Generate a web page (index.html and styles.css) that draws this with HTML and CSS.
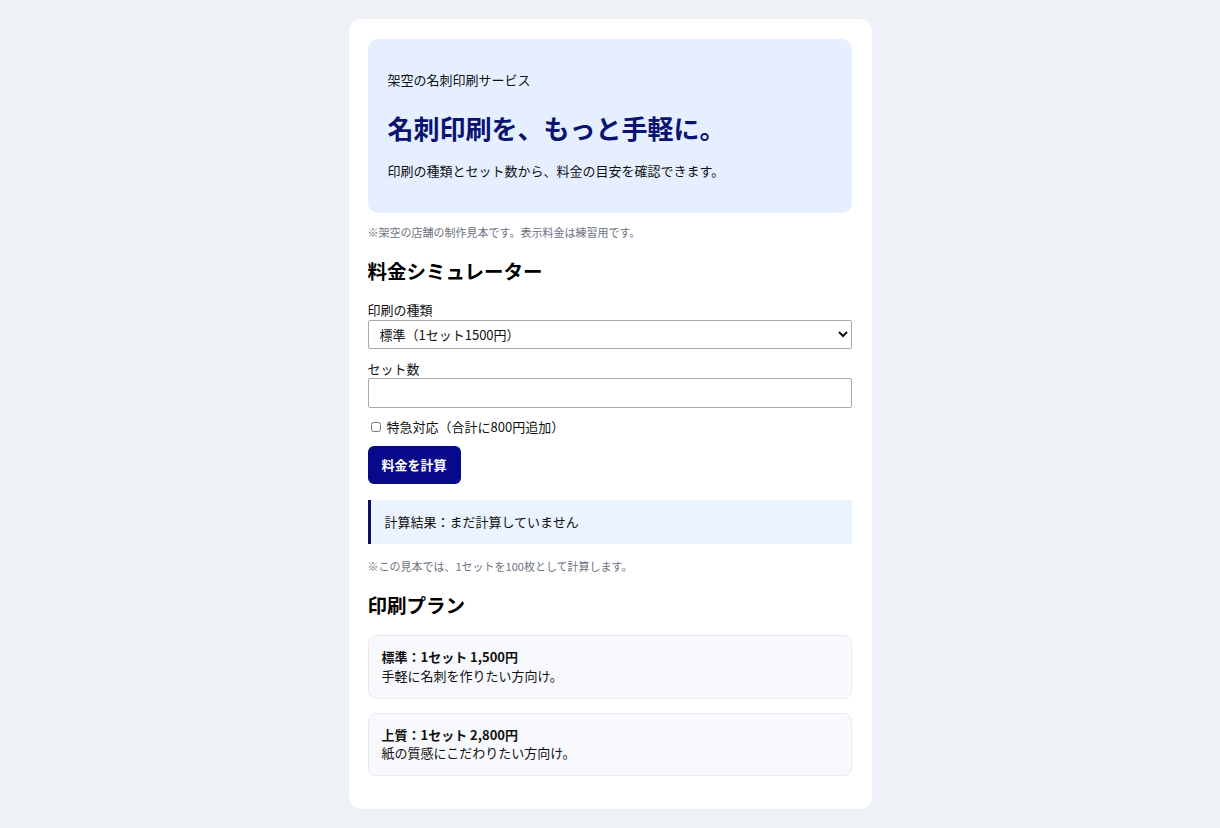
FILE: index.html
```html
<!DOCTYPE html>
<html lang="ja">
<head>
<meta charset="utf-8">
<title>名刺印刷</title>
<link rel="stylesheet" href="styles.css">
</head>
<body>
<main class="card">
  <section class="hero">
    <p class="eyebrow">架空の名刺印刷サービス</p>
    <h1 class="hero-title">名刺印刷を、もっと手軽に。</h1>
    <p class="hero-desc">印刷の種類とセット数から、料金の目安を確認できます。</p>
  </section>
  <p class="note note-top">※架空の店舗の制作見本です。表示料金は練習用です。</p>

  <h2 class="section-title">料金シミュレーター</h2>
  <form class="sim">
    <label class="field-label" for="type">印刷の種類</label>
    <select id="type" class="select">
      <option>標準（1セット1500円）</option>
      <option>上質（1セット2800円）</option>
    </select>
    <label class="field-label field-label-2" for="count">セット数</label>
    <input id="count" class="text-input" type="number">
    <label class="check-row"><input type="checkbox" class="check"> 特急対応（合計に800円追加）</label>
    <button type="button" class="btn">料金を計算</button>
  </form>
  <div class="result">計算結果：まだ計算していません</div>
  <p class="note note-mid">※この見本では、1セットを100枚として計算します。</p>

  <h2 class="section-title section-title-2">印刷プラン</h2>
  <div class="plans">
    <div class="plan">
      <strong class="plan-name">標準：1セット 1,500円</strong>
      <p class="plan-desc">手軽に名刺を作りたい方向け。</p>
    </div>
    <div class="plan">
      <strong class="plan-name">上質：1セット 2,800円</strong>
      <p class="plan-desc">紙の質感にこだわりたい方向け。</p>
    </div>
  </div>
</main>
</body>
</html>
```
FILE: styles.css
```css
* { box-sizing: border-box; }
html, body { margin: 0; }
body {
  background: #eef1f6;
  padding: 19px 0 20px;
  font-family: "Noto Sans CJK JP", "Noto Sans", sans-serif;
  font-size: 13px;
  line-height: 1.5;
  color: #111;
}
.card {
  width: 523px;
  margin: 0 auto;
  background: #fff;
  border-radius: 12px;
  padding: 20px 20px 33px 19px;
}
.hero {
  background: #e5efff;
  border-radius: 10px;
  padding: 31px 20px 33px;
}
.eyebrow { margin: 0; }
.hero-title {
  margin: 20px 0 15px;
  font-size: 26px;
  line-height: 1.4;
  color: #0b1370;
  font-weight: 700;
}
.hero-desc { margin: 0; }
.note {
  font-size: 11px;
  color: #6b7280;
  margin: 0;
}
.note-top { margin-top: 11px; }
.section-title {
  font-size: 19.5px;
  line-height: 1.4;
  margin: 16px 0 16px;
  font-weight: 700;
  color: #000;
}
.section-title-2 { margin: 17px 0 17px; }
.sim {
  display: flex;
  flex-direction: column;
  align-items: flex-start;
}
.field-label { display: block; }
.field-label-2 { margin-top: 10px; }
.select {
  width: 100%;
  height: 29px;
  font: inherit;
  font-size: 13px;
  padding: 0 7px;
  border: 1px solid #a9a9a9;
  border-radius: 2px;
  background: #fff;
  color: #111;
}
.text-input {
  width: 100%;
  height: 30px;
  font: inherit;
  border: 1px solid #a9a9a9;
  border-radius: 2px;
  padding: 0 8px;
}
.check-row {
  display: flex;
  align-items: center;
  gap: 6px;
  margin-top: 9px;
  padding-left: 3px;
}
.check {
  width: 10px;
  height: 10px;
  margin: 0;
}
.btn {
  margin-top: 9px;
  height: 38px;
  padding: 0 14px;
  background: #07088a;
  color: #fff;
  font: inherit;
  font-weight: 700;
  border: none;
  border-radius: 6px;
}
.result {
  margin-top: 16px;
  height: 44px;
  display: flex;
  align-items: center;
  background: #ebf3ff;
  border-left: 3px solid #0d0f62;
  padding-left: 14px;
}
.note-mid { margin-top: 14px; }
.plans {
  display: flex;
  flex-direction: column;
  gap: 14px;
}
.plan {
  background: #f7f9fc;
  border: 1px solid #e8ecf1;
  border-radius: 8px;
  padding: 12px 13px 13px;
  line-height: 1.4;
}
.plan-name { display: block; font-weight: 700; }
.plan-desc { margin: 0; }
```
